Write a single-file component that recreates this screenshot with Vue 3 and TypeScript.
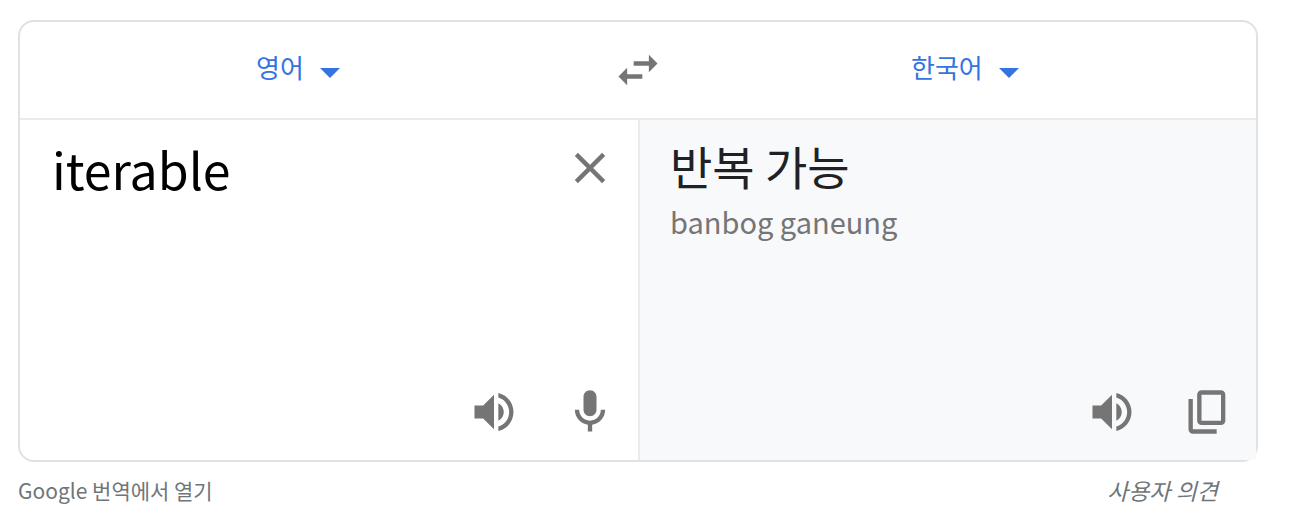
<script setup lang="ts">
import { ref } from 'vue'

const source = ref('iterable')
const from = ref('en')
const to = ref('ko')

const speaker =
  'M3 9v6h4l5 5V4L7 9H3zm13.5 3c0-1.77-1.02-3.29-2.5-4.03v8.05c1.48-.73 2.5-2.25 2.5-4.02zM14 3.23v2.06c2.89.86 5 3.54 5 6.71s-2.11 5.85-5 6.71v2.06c4.01-.91 7-4.49 7-8.77s-2.99-7.86-7-8.77z'
</script>

<template>
  <main class="translator">
    <section class="card">
      <header class="languages">
        <label class="language">
          <select v-model="from" aria-label="영어">
            <option value="en">영어</option>
          </select>
          <svg class="caret" viewBox="0 0 20 10" aria-hidden="true"><path d="M0 0h20L10 10z" /></svg>
        </label>
        <button class="icon-button" type="button" @click="source = ''">
          <svg viewBox="0 0 24 24" aria-hidden="true">
            <path d="M6.99 11L3 15l3.99 4v-3H14v-2H6.99v-3zM21 9l-3.99-4v3H10v2h7.01v3L21 9z" />
          </svg>
        </button>
        <label class="language">
          <select v-model="to" aria-label="한국어">
            <option value="ko">한국어</option>
          </select>
          <svg class="caret" viewBox="0 0 20 10" aria-hidden="true"><path d="M0 0h20L10 10z" /></svg>
        </label>
      </header>

      <div class="panes">
        <div class="pane source">
          <div class="entry">
            <textarea v-model="source" class="source-text" rows="1" spellcheck="false" aria-label="영어"></textarea>
            <button class="icon-button" type="button" @click="source = ''">
              <svg viewBox="0 0 24 24" aria-hidden="true">
                <path d="M5.7 5.7l12.6 12.6M18.3 5.7L5.7 18.3" fill="none" stroke="currentColor" stroke-width="2" />
              </svg>
            </button>
          </div>
          <div class="actions">
            <button class="icon-button" type="button">
              <svg viewBox="0 0 24 24" aria-hidden="true"><path :d="speaker" /></svg>
            </button>
            <button class="icon-button" type="button">
              <svg viewBox="0 0 24 24" aria-hidden="true">
                <path d="M12 14c1.66 0 3-1.34 3-3V5c0-1.66-1.34-3-3-3S9 3.34 9 5v6c0 1.66 1.34 3 3 3zM17 11c0 2.76-2.24 5-5 5s-5-2.24-5-5H5c0 3.53 2.61 6.43 6 6.92V21h2v-3.08c3.39-.49 6-3.39 6-6.92h-2z" />
              </svg>
            </button>
          </div>
        </div>

        <div class="pane target">
          <div class="result">
            <p class="translation">반복 가능</p>
            <p class="romanization">banbog ganeung</p>
          </div>
          <div class="actions">
            <button class="icon-button" type="button">
              <svg viewBox="0 0 24 24" aria-hidden="true"><path :d="speaker" /></svg>
            </button>
            <button class="icon-button" type="button">
              <svg viewBox="0 0 24 24" aria-hidden="true">
                <path d="M9 18q-.825 0-1.412-.587T7 16V4q0-.825.588-1.412T9 2h9q.825 0 1.413.588T20 4v12q0 .825-.587 1.413T18 18zm0-2h9V4H9zm-4 6q-.825 0-1.412-.587T3 20V6h2v14h11v2z" />
              </svg>
            </button>
          </div>
        </div>
      </div>
    </section>

    <footer class="links">
      <a href="#open">Google 번역에서 열기</a>
      <a class="feedback" href="#feedback">사용자 의견</a>
    </footer>
  </main>
</template>

<style>
body {
  background: #fff;
}
</style>

<style scoped>
.translator {
  padding: 20px 36px 0 18px;
  font-family: 'Noto Sans CJK KR', sans-serif;
  color: #202124;
}

.card {
  border: 2px solid #dfe1e5;
  border-radius: 16px;
}

.languages {
  display: grid;
  grid-template-columns: 1fr 52px 1fr;
  align-items: center;
  height: 96px;
  border-bottom: 2px solid #ebebeb;
}

.language {
  display: flex;
  align-items: center;
  justify-content: center;
  gap: 16px;
  padding: 2px 36px 0 0;
  color: #3474e0;
}

.language:last-child {
  padding: 2px 0 0 10px;
}

.language select {
  appearance: none;
  margin: 0 0 8px;
  padding: 0;
  border: 0;
  background: none;
  color: inherit;
  font: inherit;
  font-size: 26px;
  line-height: 40px;
  cursor: pointer;
}

.caret {
  width: 20px;
  height: 10px;
  margin-top: 4px;
  fill: currentColor;
  pointer-events: none;
}

.icon-button {
  flex: none;
  width: 52px;
  height: 52px;
  padding: 0;
  border: 0;
  background: none;
  color: #757575;
  cursor: pointer;
}

.icon-button svg {
  display: block;
  width: 100%;
  height: 100%;
  fill: currentColor;
}

.panes {
  display: grid;
  grid-template-columns: 1fr 1fr;
  min-height: 340px;
}

.pane {
  display: flex;
  flex-direction: column;
  justify-content: space-between;
  min-width: 0;
  box-sizing: border-box;
  padding: 16px 22px 22px 32px;
}

.target {
  padding: 12px 22px 22px 30px;
  border-left: 2px solid #ebebeb;
  background: #f8f9fb;
}

.entry {
  display: flex;
  align-items: center;
}

.source-text {
  flex: 1;
  min-width: 0;
  height: 64px;
  padding: 0;
  border: 0;
  outline: 0;
  resize: none;
  overflow: hidden;
  background: none;
  color: #000;
  font: inherit;
  font-size: 50px;
  line-height: 64px;
}

.translation,
.romanization {
  margin: 0;
}

.translation {
  font-size: 46px;
  line-height: 66px;
}

.romanization {
  color: #757575;
  font-size: 29px;
  line-height: 46px;
}

.actions {
  display: flex;
  justify-content: flex-end;
  gap: 44px;
}

.links {
  display: flex;
  justify-content: space-between;
  padding: 12px 40px 0 0;
  font-size: 21px;
  line-height: 32px;
}

.links a {
  color: #70757a;
  text-decoration: none;
}

.links .feedback {
  font-size: 23px;
  font-style: italic;
}
</style>
